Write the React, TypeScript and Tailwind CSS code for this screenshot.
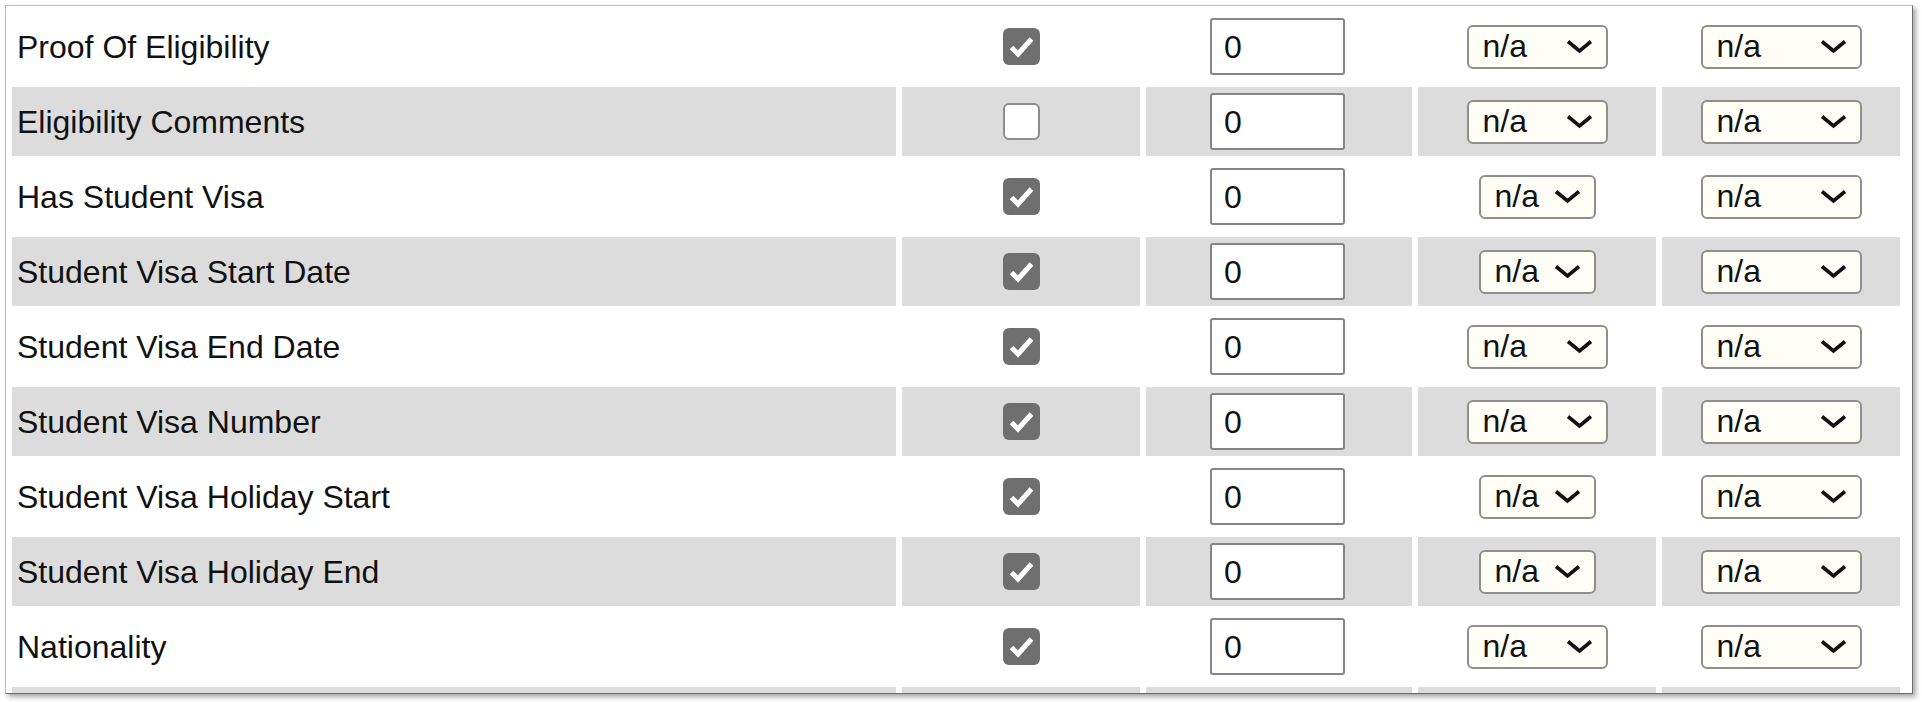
const rows = [
  { label: "Proof Of Eligibility", checked: true, narrow: false },
  { label: "Eligibility Comments", checked: false, narrow: false },
  { label: "Has Student Visa", checked: true, narrow: true },
  { label: "Student Visa Start Date", checked: true, narrow: true },
  { label: "Student Visa End Date", checked: true, narrow: false },
  { label: "Student Visa Number", checked: true, narrow: false },
  { label: "Student Visa Holiday Start", checked: true, narrow: true },
  { label: "Student Visa Holiday End", checked: true, narrow: true },
  { label: "Nationality", checked: true, narrow: false },
];

function Checkbox({ checked }: { checked: boolean }) {
  if (!checked) {
    return (
      <span className="inline-block w-[37px] h-[37px] rounded-[6px] border-2 border-[#8d8d8d] bg-white align-middle" />
    );
  }
  return (
    <span className="inline-flex w-[37px] h-[37px] rounded-[6px] bg-[#6f6f6f] items-center justify-center align-middle">
      <svg width="37" height="37" viewBox="0 0 37 37">
        <polyline
          points="8.5,19.5 15,26 28.5,11"
          fill="none"
          stroke="white"
          strokeWidth={5}
          strokeLinejoin="miter"
        />
      </svg>
    </span>
  );
}

function Select({ width }: { width: string }) {
  return (
    <div
      className={`${width} h-[44px] mx-auto flex items-center justify-between pl-[14px] pr-[13px] border-2 border-[#8e8e8e] rounded-[6px] bg-[#fffef6] text-[32px] leading-none text-[#111]`}
    >
      <span className="-mt-[2px]">n/a</span>
      <svg width="27" height="15" viewBox="0 0 27 15">
        <path d="M2 2.5 L13.5 12 L25 2.5" fill="none" stroke="#111" strokeWidth={3.6} />
      </svg>
    </div>
  );
}

export default function App() {
  return (
    <div className="w-[1922px] h-[702px] bg-white overflow-hidden font-['Liberation_Sans',Arial,sans-serif]">
      <div className="ml-[5px] mt-[5px] w-[1908px] h-[689px] overflow-hidden bg-white border border-t-[#bdbdbd] border-l-[#bdbdbd] border-r-[#6c6c6c] border-b-[#6c6c6c] shadow-[3px_3px_5px_rgba(0,0,0,0.35)]">
        <table className="table-fixed border-separate border-spacing-[6px] w-[1900px]">
          <colgroup>
            <col className="w-[884px]" />
            <col className="w-[238px]" />
            <col className="w-[266px]" />
            <col className="w-[238px]" />
            <col className="w-[238px]" />
          </colgroup>
          <tbody>
            {rows.map((r, i) => {
              const bg = i % 2 === 1 ? "bg-[#dcdcdc]" : "bg-white";
              return (
                <tr key={i}>
                  <td className={`${bg} h-[69px] p-0 pl-[5px] align-middle text-[32px] leading-none text-[#111] whitespace-nowrap`}>
                    {r.label}
                  </td>
                  <td className={`${bg} h-[69px] p-0 text-center align-middle`}>
                    <Checkbox checked={r.checked} />
                  </td>
                  <td className={`${bg} h-[69px] p-0 align-middle`}>
                    <div className="w-[135px] h-[57px] ml-[64px] flex items-center pl-[12px] border-2 border-[#858585] rounded-[3px] bg-white text-[32px] leading-none text-[#111]">
                      0
                    </div>
                  </td>
                  <td className={`${bg} h-[69px] p-0 align-middle`}>
                    <Select width={r.narrow ? "w-[117px]" : "w-[141px]"} />
                  </td>
                  <td className={`${bg} h-[69px] p-0 align-middle`}>
                    <Select width="w-[161px]" />
                  </td>
                </tr>
              );
            })}
            <tr>
              <td className="bg-[#dcdcdc] h-[69px] p-0" />
              <td className="bg-[#dcdcdc] h-[69px] p-0" />
              <td className="bg-[#dcdcdc] h-[69px] p-0" />
              <td className="bg-[#dcdcdc] h-[69px] p-0" />
              <td className="bg-[#dcdcdc] h-[69px] p-0" />
            </tr>
          </tbody>
        </table>
      </div>
    </div>
  );
}
